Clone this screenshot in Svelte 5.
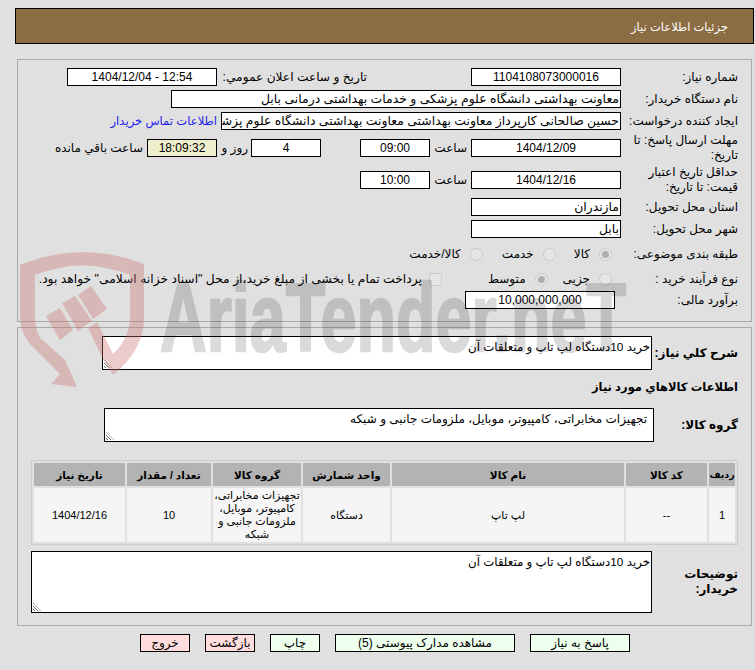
<script lang="ts">
	const items = [
		{
			row: '1',
			code: '--',
			name: 'لپ تاپ',
			unit: 'دستگاه',
			group: 'تجهیزات مخابراتی، کامپیوتر، موبایل، ملزومات جانبی و شبکه',
			qty: '10',
			date: '1404/12/16'
		}
	];
</script>

<div class="page" dir="rtl">
	<div class="title-bar">جزئیات اطلاعات نیاز</div>

	<section class="panel top">
		<div class="row">
			<div class="lbl">شماره نیاز:</div>
			<div class="field w150 center">1104108073000016</div>
			<div class="lbl-mid">تاریخ و ساعت اعلان عمومي:</div>
			<div class="field w150 center">12:54 - 1404/12/04</div>
		</div>
		<div class="row">
			<div class="lbl">نام دستگاه خریدار:</div>
			<div class="field w450">معاونت بهداشتی دانشگاه علوم پزشکی و خدمات بهداشتی درمانی بابل</div>
		</div>
		<div class="row">
			<div class="lbl">ایجاد کننده درخواست:</div>
			<div class="field w400">حسین صالحانی کارپرداز معاونت بهداشتی معاونت بهداشتی دانشگاه علوم پزشکی بابل</div>
			<a class="contact" href="#contact">اطلاعات تماس خریدار</a>
		</div>
		<div class="row tall first">
			<div class="lbl wrap">مهلت ارسال پاسخ: تا تاریخ:</div>
			<div class="field w150 center">1404/12/09</div>
			<div class="unit">ساعت</div>
			<div class="field w70 center">09:00</div>
			<div class="unit days-gap"></div>
			<div class="field w70 center">4</div>
			<div class="unit and">روز و</div>
			<div class="field w70 center clock">18:09:32</div>
			<div class="remain">ساعت باقي مانده</div>
		</div>
		<div class="row tall second">
			<div class="lbl wrap">حداقل تاریخ اعتبار قیمت: تا تاریخ:</div>
			<div class="field w150 center">1404/12/16</div>
			<div class="unit">ساعت</div>
			<div class="field w70 center">10:00</div>
		</div>
		<div class="row">
			<div class="lbl">استان محل تحویل:</div>
			<div class="field w150">مازندران</div>
		</div>
		<div class="row">
			<div class="lbl">شهر محل تحویل:</div>
			<div class="field w150">بابل</div>
		</div>
		<div class="row choice">
			<div class="lbl">طبقه بندی موضوعی:</div>
			<div class="options">
				<span class="radio on"></span><span class="opt o1">کالا</span>
				<span class="radio"></span><span class="opt o2">خدمت</span>
				<span class="radio"></span><span class="opt">کالا/خدمت</span>
			</div>
		</div>
		<div class="row choice">
			<div class="lbl">نوع فرآیند خرید :</div>
			<div class="options">
				<span class="radio"></span><span class="opt o3">جزیی</span>
				<span class="radio on"></span><span class="opt o4">متوسط</span>
				<span class="check"></span><span class="opt treasury">پرداخت تمام یا بخشی از مبلغ خرید،از محل "اسناد خزانه اسلامی" خواهد بود.</span>
			</div>
		</div>
		<div class="row budget">
			<div class="lbl">برآورد مالی:</div>
			<div class="field w150 center">10,000,000,000</div>
		</div>
	</section>

	<section class="panel bottom">
		<div class="row summary">
			<div class="lbl strong">شرح کلي نیاز:</div>
			<div class="area a-summary">خرید 10دستگاه لپ تاپ و متعلقات آن<span class="grip"></span></div>
		</div>
		<div class="subhead">اطلاعات کالاهاي مورد نیاز</div>
		<div class="row group">
			<div class="lbl strong">گروه کالا:</div>
			<div class="area a-group">تجهیزات مخابراتی، کامپیوتر، موبایل، ملزومات جانبی و شبکه<span class="grip"></span></div>
		</div>

		<table class="items">
			<thead>
				<tr>
					<th class="c-row">ردیف</th>
					<th class="c-code">کد کالا</th>
					<th class="c-name">نام کالا</th>
					<th class="c-unit">واحد شمارش</th>
					<th class="c-group">گروه کالا</th>
					<th class="c-qty">تعداد / مقدار</th>
					<th>تاریخ نیاز</th>
				</tr>
			</thead>
			<tbody>
				{#each items as item (item.row)}
					<tr>
						<td>{item.row}</td>
						<td>{item.code}</td>
						<td>{item.name}</td>
						<td>{item.unit}</td>
						<td>{item.group}</td>
						<td>{item.qty}</td>
						<td>{item.date}</td>
					</tr>
				{/each}
			</tbody>
		</table>

		<div class="row notes">
			<div class="lbl strong wrap-note">توضیحات خریدار:</div>
			<div class="area a-notes">خرید 10دستگاه لپ تاپ و متعلقات آن<span class="grip"></span></div>
		</div>
	</section>

	<div class="actions">
		<button class="btn green b-reply">پاسخ به نیاز</button>
		<button class="btn green b-docs">مشاهده مدارک پیوستی (5)</button>
		<button class="btn green">چاپ</button>
		<button class="btn red">بازگشت</button>
		<button class="btn red">خروج</button>
	</div>

	<!-- watermark sits over the whole form, inputs included -->
	<svg class="watermark" width="755" height="670" viewBox="0 0 755 670" aria-hidden="true">
		<g fill="#c97070" fill-opacity="0.36">
			<path
				fill-rule="evenodd"
				d="M20 265 Q82 240 144 264 V317 Q144 350 113 375 L103 359 L88 328 L97 322 L113 354 Q130 338 130 317 V275 Q82 256 35 275 V317 Q35 328 40 338 L65 360 L77 387 L51 384 L60 374 L30 344 Q20 332 20 317 Z"
			/>
			<path d="M46 316 L60 308 L73 330 L60 340 Z" />
			<path d="M62 303 L75 296 L92 321 L78 331 Z" />
			<path d="M78 295 L91 286 L107 309 L93 319 Z" />
		</g>
		<text class="wm-text" x="160" y="351" textLength="466" lengthAdjust="spacingAndGlyphs">AriaTender.neT</text>
	</svg>
</div>

<style>
	:global(body) {
		margin: 0;
		background: #e0e0e0;
	}

	.page {
		position: relative;
		width: 755px;
		height: 670px;
		overflow: hidden;
		padding: 8px 1px 0 15px;
		box-sizing: border-box;
		background: #e0e0e0;
		color: #000;
		font-family: 'Liberation Sans', 'DejaVu Sans', sans-serif;
		font-size: 12px;
	}

	.title-bar {
		height: 34px;
		line-height: 36px;
		background: #8b6d43;
		border: 1px solid #000;
		color: #fff;
		padding-right: 25px;
		font-size: 11.5px;
	}

	.panel {
		border: 1px solid #aaa;
		margin: 0 2px;
		box-sizing: border-box;
	}

	.top {
		margin-top: 15px;
		height: 263px;
		padding-top: 8px;
	}

	.bottom {
		margin-top: 5px;
		height: 299px;
		padding-top: 8px;
	}

	.row {
		display: flex;
		align-items: center;
		height: 18px;
		margin-bottom: 4px;
	}

	.lbl {
		width: 130px;
		box-sizing: border-box;
		padding-right: 13px;
		flex-shrink: 0;
		white-space: nowrap;
	}

	.lbl.wrap {
		white-space: normal;
		line-height: 15px;
	}

	.lbl.strong {
		font-weight: bold;
	}

	.field {
		height: 16px;
		line-height: 16px;
		background: #fff;
		border: 1px solid #000;
		white-space: nowrap;
		overflow: hidden;
		padding: 0 1px;
		flex-shrink: 0;
		font-size: 12.4px;
	}

	.center {
		text-align: center;
		font-size: 12px;
	}

	.w150 {
		width: 146px;
	}

	.w400 {
		width: 396px;
	}

	.w450 {
		width: 446px;
	}

	.w70 {
		width: 66px;
	}

	.clock {
		background: #eeeecc;
	}

	.lbl-mid {
		margin-right: 104px;
		width: 150px;
		padding-right: 0;
		white-space: nowrap;
		font-size: 12.2px;
	}

	.contact {
		color: #2222ee;
		text-decoration: none;
		margin-right: 4px;
		white-space: nowrap;
		font-size: 11.6px;
	}

	.unit {
		width: 41px;
		padding-right: 4px;
		box-sizing: border-box;
		white-space: nowrap;
	}

	.days-gap {
		width: 39px;
	}

	.and {
		width: 34px;
		padding-right: 3px;
	}

	.remain {
		margin-right: 4px;
		white-space: nowrap;
	}

	.tall {
		height: 30px;
		margin-bottom: 2px;
	}

	.tall.first {
		margin-top: -1px;
	}

	.tall.second {
		margin-bottom: 3px;
	}

	.choice {
		margin-top: 7px;
		margin-bottom: 0;
	}

	.options {
		display: flex;
		align-items: center;
		margin-right: 9px;
	}

	.radio {
		width: 11px;
		height: 11px;
		border-radius: 50%;
		border: 1px solid #cacaca;
		background: #e6e6e6;
		flex-shrink: 0;
		margin-left: 9px;
		position: relative;
	}

	.radio.on::after {
		content: '';
		position: absolute;
		inset: 2px;
		border-radius: 50%;
		background: #aeaeae;
	}

	.check {
		width: 11px;
		height: 11px;
		border: 1px solid #cacaca;
		background: #e6e6e6;
		border-radius: 2px;
		flex-shrink: 0;
		margin-left: 7px;
	}

	.opt {
		white-space: nowrap;
	}

	.treasury {
		font-size: 12.3px;
	}

	.o1 {
		margin-left: 18px;
	}

	.o2 {
		margin-left: 19px;
	}

	.o3 {
		margin-left: 15px;
	}

	.o4 {
		margin-left: 46px;
	}

	.budget {
		margin-top: 3px;
	}

	.budget .field {
		margin-right: 6px;
	}

	.area {
		position: relative;
		background: #fff;
		border: 1px solid #000;
		box-sizing: border-box;
		padding: 2px 1px 0 0;
		line-height: 16px;
		flex-shrink: 0;
		font-size: 11.8px;
	}

	.grip {
		position: absolute;
		left: 1px;
		bottom: 1px;
		width: 8px;
		height: 8px;
		background: repeating-linear-gradient(45deg, #fff 0 1px, #666 1px 2px);
		clip-path: polygon(0 0, 100% 100%, 0 100%);
	}

	.summary {
		height: 34px;
		margin-bottom: 0;
	}

	.summary .lbl,
	.notes .lbl {
		width: 99px;
	}

	.a-summary {
		width: 550px;
		height: 34px;
	}

	.subhead {
		font-weight: bold;
		font-size: 11.5px;
		padding-right: 13px;
		margin-top: 7px;
		height: 20px;
		line-height: 20px;
	}

	.group {
		height: 34px;
		margin-top: 11px;
		margin-bottom: 0;
	}

	.group .lbl {
		width: 97px;
	}

	.a-group {
		width: 550px;
		height: 34px;
		padding: 2px 6px 0 0;
		font-size: 12px;
	}

	.items {
		width: 707px;
		margin: 18px 13px 0 0;
		border: 1px solid #ccc;
		border-collapse: separate;
		border-spacing: 2px;
		table-layout: fixed;
		font-size: 11px;
		box-sizing: border-box;
	}

	th {
		height: 23px;
		background: #b3b3b3;
		padding: 0;
		font-weight: bold;
		font-size: 10.5px;
		white-space: nowrap;
	}

	th.c-row {
		font-size: 9.5px;
	}

	td {
		height: 54px;
		background: #f5f5f5;
		text-align: center;
		padding: 0;
		line-height: 13px;
	}

	.c-row {
		width: 26px;
	}

	.c-code {
		width: 81px;
	}

	.c-name {
		width: 232px;
	}

	.c-unit {
		width: 87px;
	}

	.c-group {
		width: 88px;
	}

	.c-qty {
		width: 84px;
	}

	.notes {
		height: 62px;
		margin-top: 6px;
		margin-bottom: 0;
	}

	.a-notes {
		width: 621px;
		height: 62px;
	}

	.lbl.wrap-note {
		white-space: normal;
		line-height: 15px;
	}

	.actions {
		display: flex;
		margin-top: 8px;
		padding-right: 124px;
		gap: 15px;
	}

	.btn {
		width: 50px;
		height: 18px;
		padding: 0;
		border: 1px solid #000;
		font: inherit;
		font-size: 12px;
		color: #000;
		box-sizing: border-box;
	}

	.green {
		background: #eeffee;
	}

	.red {
		background: #ffdddd;
	}

	.b-reply {
		width: 100px;
	}

	.b-docs {
		width: 180px;
	}

	.watermark {
		position: absolute;
		left: 0;
		top: 0;
		pointer-events: none;
		direction: ltr;
	}

	.wm-text {
		direction: ltr;
		unicode-bidi: isolate;
		font-family: 'Liberation Sans', sans-serif;
		font-weight: bold;
		font-size: 96px;
		fill: #000;
		stroke: #000;
		stroke-width: 2.5px;
		stroke-linejoin: round;
		opacity: 0.14;
	}
</style>
